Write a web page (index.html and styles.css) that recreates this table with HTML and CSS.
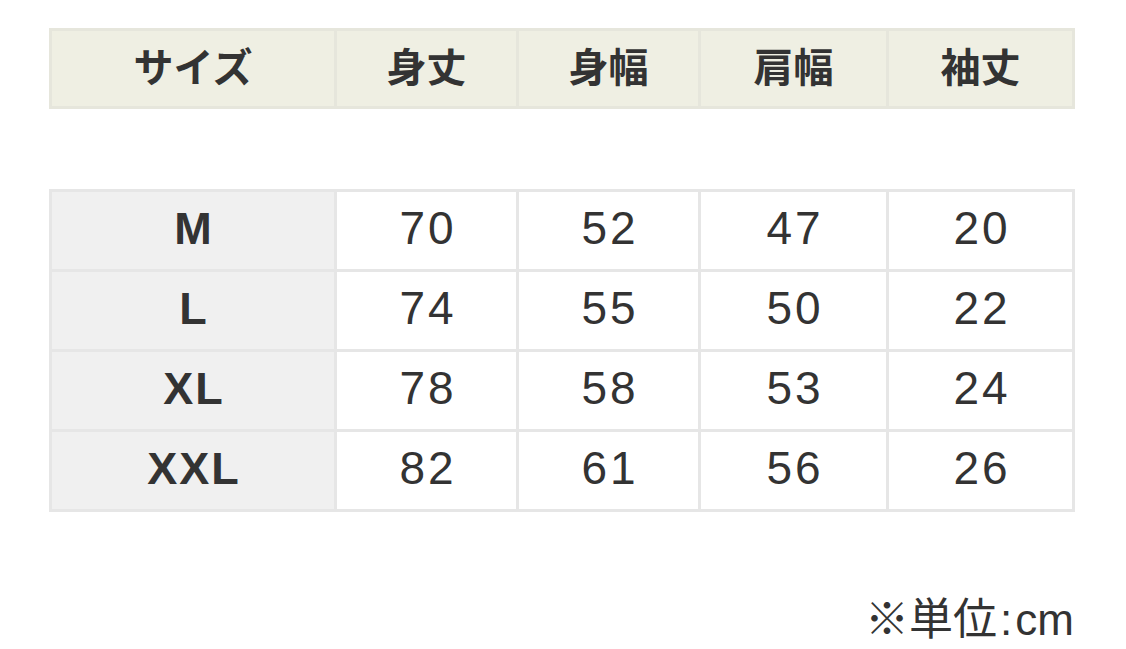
FILE: index.html
```html
<!DOCTYPE html>
<html lang="ja">
<head>
<meta charset="utf-8">
<link rel="stylesheet" href="styles.css">
</head>
<body>
<div class="page">
  <table class="size-table head-table">
    <colgroup>
      <col class="c1"><col class="c2"><col class="c3"><col class="c4"><col class="c5">
    </colgroup>
    <tr>
      <th>サイズ</th><th>身丈</th><th>身幅</th><th>肩幅</th><th>袖丈</th>
    </tr>
  </table>
  <table class="size-table body-table">
    <colgroup>
      <col class="c1"><col class="c2"><col class="c3"><col class="c4"><col class="c5">
    </colgroup>
    <tr><th>M</th><td>70</td><td>52</td><td>47</td><td>20</td></tr>
    <tr><th>L</th><td>74</td><td>55</td><td>50</td><td>22</td></tr>
    <tr><th>XL</th><td>78</td><td>58</td><td>53</td><td>24</td></tr>
    <tr><th>XXL</th><td>82</td><td>61</td><td>56</td><td>26</td></tr>
  </table>
  <p class="note">※単位<span class="colon">:</span>cm</p>
</div>
</body>
</html>
```
FILE: styles.css
```css
html, body {
  margin: 0;
  padding: 0;
  background: #ffffff;
}
body {
  font-family: "Liberation Sans", "Noto Sans CJK JP", sans-serif;
  color: #333333;
}
.page {
  width: 1023px;
  padding: 28px 0 0 49px;
}
.size-table {
  width: 1023px;
  table-layout: fixed;
  border-collapse: collapse;
}
.c1 { width: 285px; }
.c2 { width: 182px; }
.c3 { width: 182px; }
.c4 { width: 188px; }
.c5 { width: 186px; }
.size-table th,
.size-table td {
  border: 3px solid #e6e6e6;
  text-align: center;
  vertical-align: middle;
  padding: 0 0 5px 0;
  height: 80px;
  box-sizing: border-box;
}
.head-table th {
  height: 78px;
  padding-bottom: 8px;
  background: #efefe3;
  border-color: #e6e6dc;
  font-family: "Noto Sans CJK JP", sans-serif;
  font-weight: 700;
  font-size: 40px;
  line-height: 1;
}
.body-table {
  margin-top: 80px;
}
.body-table th {
  background: #f0f0f0;
  font-weight: 700;
  font-size: 45px;
  line-height: 1;
  letter-spacing: 2px;
  text-indent: 2px;
}
.body-table td {
  background: #ffffff;
  font-weight: 400;
  font-size: 46px;
  line-height: 1;
  letter-spacing: 3px;
  text-indent: 3px;
}
.note {
  margin: 86px -2px 0 0;
  text-align: right;
  font-family: "Liberation Sans", "Noto Sans CJK JP", sans-serif;
  font-size: 44px;
  line-height: 1;
}
.colon {
  margin: 0 3px;
}
```
